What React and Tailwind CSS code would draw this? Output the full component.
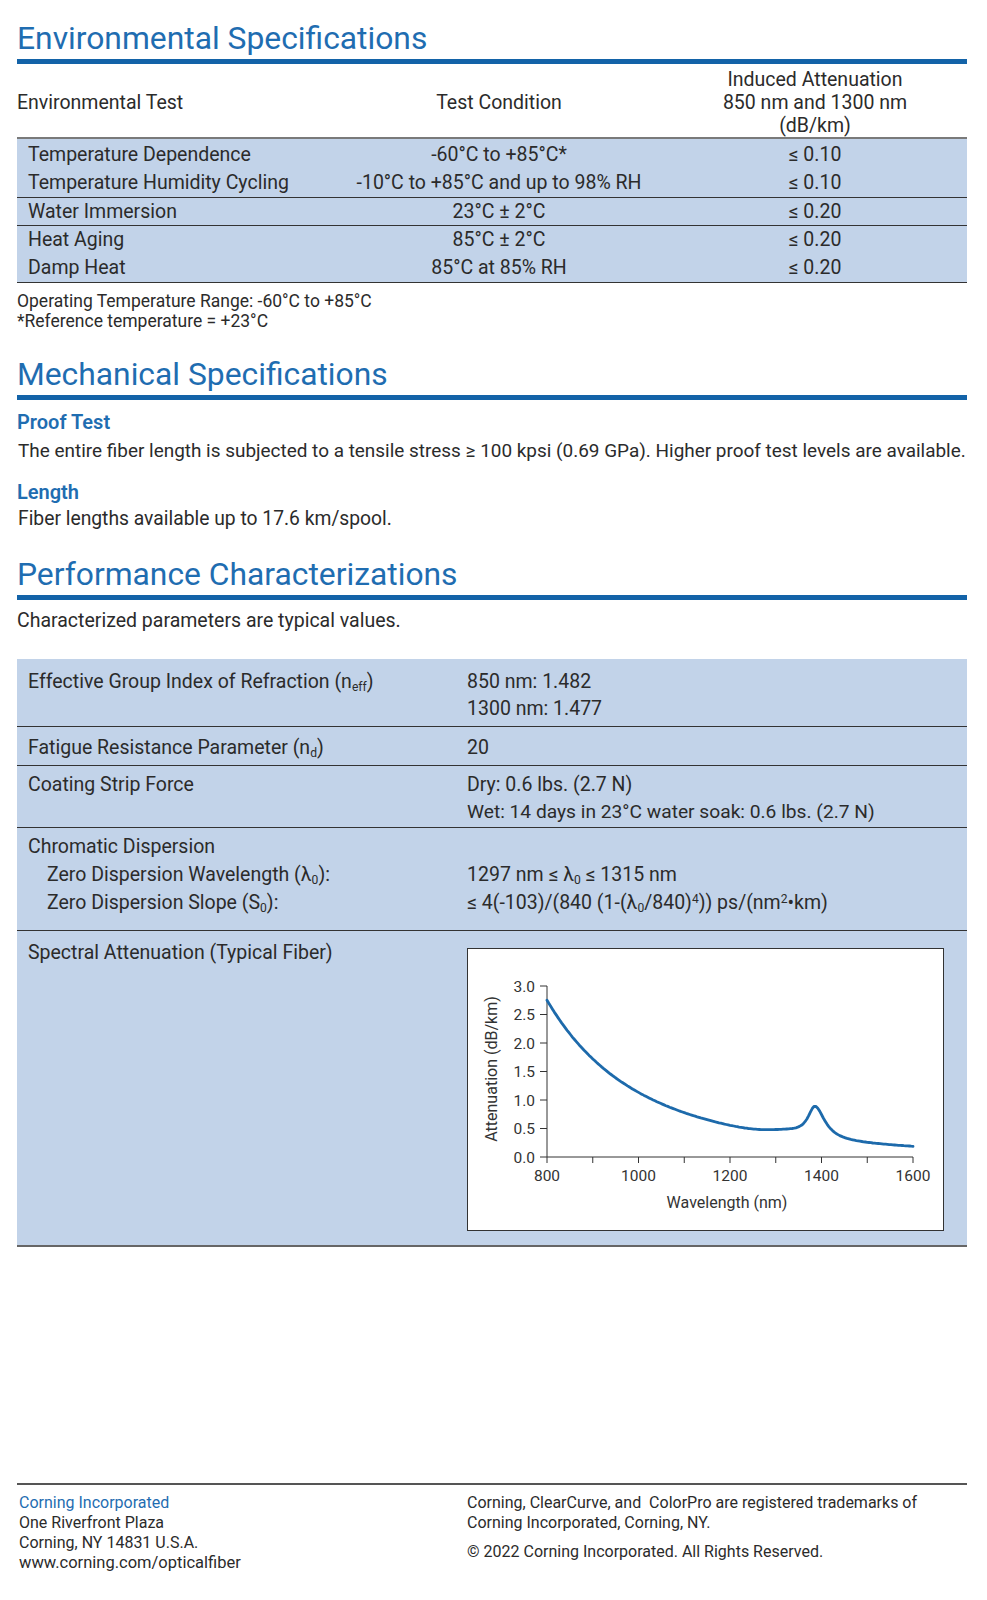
import React from "react";

const envRows = [
  [
    ["Temperature Dependence", "-60°C to +85°C*", "≤ 0.10"],
    ["Temperature Humidity Cycling", "-10°C to +85°C and up to 98% RH", "≤ 0.10"],
  ],
  [["Water Immersion", "23°C ± 2°C", "≤ 0.20"]],
  [
    ["Heat Aging", "85°C ± 2°C", "≤ 0.20"],
    ["Damp Heat", "85°C at 85% RH", "≤ 0.20"],
  ],
];

// rough fit of the typical fiber curve: rayleigh + water peak
const atten = (l) => {
  const ray = 2.741 * Math.pow(800 / l, 4) + 0.009;
  const broad = 0.07 * Math.exp(-Math.pow((l - 1330) / 60, 2));
  const w = l < 1386 ? 19 : 26;
  const peak = 0.55 / (1 + Math.pow((l - 1386) / w, 2));
  return ray + broad + peak;
};

const Sub = ({ children }) => <sub className="text-[0.62em]">{children}</sub>;

const SpectralChart = () => {
  const x0 = 79;
  const y0 = 208;
  const sx = 0.4575;
  const sy = 57;
  let d = "";
  for (let l = 800; l <= 1600; l += 4) {
    const x = x0 + (l - 800) * sx;
    const y = y0 - atten(l) * sy;
    d += (l === 800 ? "M" : "L") + x.toFixed(1) + " " + y.toFixed(1) + " ";
  }
  const yTicks = [0, 0.5, 1, 1.5, 2, 2.5, 3];
  const xTicks = [800, 900, 1000, 1100, 1200, 1300, 1400, 1500, 1600];

  return (
    <svg width="475" height="281" viewBox="0 0 475 281" className="block">
      <g fill="#333" fontFamily="Roboto, 'Liberation Sans', sans-serif">
        {yTicks.map((v) => (
          <g key={v}>
            <line x1={x0 - 7} x2={x0} y1={y0 - v * sy} y2={y0 - v * sy} stroke="#333" strokeWidth="1" />
            <text x={x0 - 12} y={y0 - v * sy + 5.5} fontSize="15.5" textAnchor="end">
              {v.toFixed(1)}
            </text>
          </g>
        ))}
        {xTicks.map((n) => (
          <g key={n}>
            <line x1={x0 + (n - 800) * sx} x2={x0 + (n - 800) * sx} y1={y0} y2={y0 + 6} stroke="#333" strokeWidth="1" />
            {n % 200 === 0 && (
              <text x={x0 + (n - 800) * sx} y={y0 + 24} fontSize="15.5" textAnchor="middle">
                {n}
              </text>
            )}
          </g>
        ))}
        <line x1={x0} x2={x0} y1={y0 - 3 * sy} y2={y0} stroke="#333" strokeWidth="1" />
        <line x1={x0} x2={x0 + 800 * sx} y1={y0} y2={y0} stroke="#333" strokeWidth="1" />
        <text x="259" y="259" fontSize="16" textAnchor="middle">
          Wavelength (nm)
        </text>
        <text transform="translate(29,120) rotate(-90)" fontSize="16" textAnchor="middle">
          Attenuation (dB/km)
        </text>
      </g>
      <path d={d} fill="none" stroke="#1d6aab" strokeWidth="2.8" strokeLinejoin="round" strokeLinecap="round" />
    </svg>
  );
};

const SectionTitle = ({ children, className }) => (
  <div className={className}>
    <h2 className="text-[31.8px] leading-[36px] text-[#1f6db1]">{children}</h2>
    <div className="mt-[3px] h-[5px] bg-[#1363a8]" />
  </div>
);

const App = () => {
  return (
    <div className="w-[987px] min-h-[1600px] bg-white pl-[17px] pr-[20px] font-['Roboto','Liberation_Sans',sans-serif] text-[#2b2b2b]">
      {/* Environmental */}
      <SectionTitle className="pt-[20px]">Environmental Specifications</SectionTitle>
      <div className="grid h-[73px] grid-cols-[318px_328px_1fr] items-center pt-[4px] text-[19.5px] leading-[23px]">
        <div>Environmental Test</div>
        <div className="text-center">Test Condition</div>
        <div className="text-center">
          Induced Attenuation
          <br />
          850 nm and 1300 nm
          <br />
          (dB/km)
        </div>
      </div>
      <div className="border-t-2 border-[#7a7a7a] bg-[#c2d3e9] text-[19.5px] leading-[28px]">
        {envRows.map((group, gi) => (
          <div key={gi} className={gi === 0 ? "border-b border-[#333] pt-[2px]" : "border-b border-[#333]"}>
            {group.map((r) => (
              <div key={r[0]} className={gi === 1 ? "grid h-[27px] grid-cols-[318px_328px_1fr] leading-[27px]" : "grid h-[28px] grid-cols-[318px_328px_1fr]"}>
                <div className="pl-[11px]">{r[0]}</div>
                <div className="text-center">{r[1]}</div>
                <div className="text-center">{r[2]}</div>
              </div>
            ))}
          </div>
        ))}
      </div>
      <div className="mt-[8px] text-[17.5px] leading-[20px]">
        <p>Operating Temperature Range: -60°C to +85°C</p>
        <p>*Reference temperature = +23°C</p>
      </div>

      {/* Mechanical */}
      <SectionTitle className="mt-[25px]">Mechanical Specifications</SectionTitle>
      <div className="text-[19.5px] leading-[26px]">
        <h3 className="mt-[9px] text-[20px] font-semibold text-[#1f6db1]">Proof Test</h3>
        <p className="mt-[3px] whitespace-nowrap pl-[1px] text-[18.95px]">
          The entire fiber length is subjected to a tensile stress ≥ 100 kpsi (0.69 GPa). Higher proof test levels are available.
        </p>
        <h3 className="mt-[15px] text-[20px] font-semibold text-[#1f6db1]">Length</h3>
        <p className="mt-[1px] pl-[1px] text-[19.3px]">Fiber lengths available up to 17.6 km/spool.</p>
      </div>

      {/* Performance */}
      <SectionTitle className="mt-[24px]">Performance Characterizations</SectionTitle>
      <p className="mt-[8px] text-[19.5px] leading-[26px]">Characterized parameters are typical values.</p>

      <div className="mt-[25px] bg-[#c2d3e9] text-[19.5px] leading-[27px]">
        <div className="grid h-[68px] grid-cols-[450px_1fr] border-b border-[#333] pt-[9px]">
          <div className="pl-[11px]">
            Effective Group Index of Refraction (n<Sub>eff</Sub>)
          </div>
          <div>
            <p>850 nm: 1.482</p>
            <p>1300 nm: 1.477</p>
          </div>
        </div>
        <div className="grid h-[39px] grid-cols-[450px_1fr] border-b border-[#333] pt-[7px]">
          <div className="pl-[11px]">
            Fatigue Resistance Parameter (n<Sub>d</Sub>)
          </div>
          <div>20</div>
        </div>
        <div className="grid h-[62px] grid-cols-[450px_1fr] border-b border-[#333] pt-[5px]">
          <div className="pl-[11px]">Coating Strip Force</div>
          <div>
            <p>Dry: 0.6 lbs. (2.7 N)</p>
            <p className="text-[19.2px]">Wet: 14 days in 23°C water soak: 0.6 lbs. (2.7 N)</p>
          </div>
        </div>
        <div className="grid h-[103px] grid-cols-[450px_1fr] border-b border-[#333] pt-[5px] leading-[28px]">
          <div className="pl-[11px]">
            <p>Chromatic Dispersion</p>
            <p className="pl-[19px]">
              Zero Dispersion Wavelength (λ<Sub>0</Sub>):
            </p>
            <p className="pl-[19px]">
              Zero Dispersion Slope (S<Sub>0</Sub>):
            </p>
          </div>
          <div>
            <p>&nbsp;</p>
            <p>
              1297 nm ≤ λ<Sub>0</Sub> ≤ 1315 nm
            </p>
            <p>
              ≤ 4(-103)/(840 (1-(λ<Sub>0</Sub>/840)<sup className="text-[0.62em]">4</sup>)) ps/(nm<sup className="text-[0.62em]">2</sup>•km)
            </p>
          </div>
        </div>
        <div className="grid grid-cols-[450px_1fr] border-b-2 border-[#666] pt-[8px] pb-[14px]">
          <div className="pl-[11px]">Spectral Attenuation (Typical Fiber)</div>
          <div className="pt-[9px]">
            <div className="w-[477px] border border-[#333] bg-white">
              <SpectralChart />
            </div>
          </div>
        </div>
      </div>

      {/* Footer */}
      <footer className="mt-[236px] border-t-2 border-[#555] pt-[8px] text-[16px] leading-[20px]">
        <div className="grid grid-cols-[450px_1fr]">
          <div className="pl-[2px]">
            <p className="text-[#1f6db1]">Corning Incorporated</p>
            <p>One Riverfront Plaza</p>
            <p>Corning, NY 14831 U.S.A.</p>
            <p className="text-[16.5px]">www.corning.com/opticalfiber</p>
          </div>
          <div>
            <p>Corning, ClearCurve, and&nbsp; ColorPro are registered trademarks of</p>
            <p>Corning Incorporated, Corning, NY.</p>
            <p className="mt-[9px]">© 2022 Corning Incorporated. All Rights Reserved.</p>
          </div>
        </div>
      </footer>
    </div>
  );
};

export default App;
